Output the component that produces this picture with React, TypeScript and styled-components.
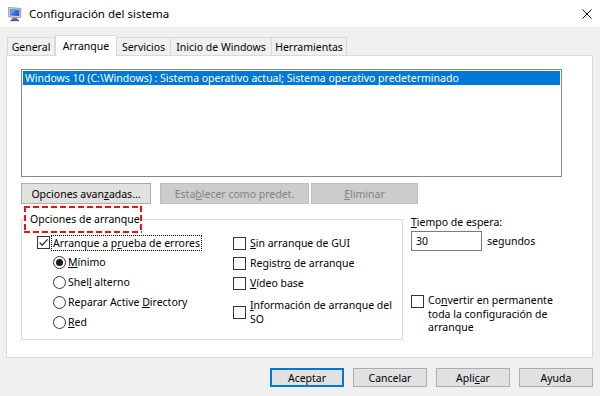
import React from 'react';
import styled, { createGlobalStyle, css } from 'styled-components';

const FONT = `"Noto Sans", "Segoe UI", "DejaVu Sans", sans-serif`;

const Global = createGlobalStyle`
  html, body { margin: 0; padding: 0; }
  body {
    width: 600px; height: 396px; overflow: hidden;
    background: #f0f0f0; font-family: ${FONT}; font-size: 10.5px; color: #000;
  }
  #root { width: 600px; height: 396px; }
`;

const Window = styled.div`
  width: 600px; height: 396px;
  display: flex; flex-direction: column;
  background: #f0f0f0;
`;

const TitleBar = styled.div`
  height: 27px; flex: none;
  background: #fff;
  display: flex; align-items: center;
  padding-left: 7px; padding-right: 8px;
`;

const Title = styled.span`
  margin-left: 6px;
  font-size: 11.5px;
  color: #000;
`;

const CloseGlyph = styled.svg`
  margin-left: auto;
  display: block;
`;

const Body = styled.div`
  flex: 1;
  display: flex; flex-direction: column;
  padding: 8px 7px 0 6px;
`;

const TabStrip = styled.div`
  height: 20px;
  display: flex; align-items: flex-end;
  padding-left: 1px;
  position: relative; z-index: 2;
`;

const Tab = styled.div<{ $w: number; $active?: boolean; $first?: boolean }>`
  box-sizing: border-box;
  width: ${p => p.$w}px;
  height: 18px;
  display: flex; align-items: center; justify-content: center;
  background: #f0f0f0;
  border: 1px solid #d9d9d9; border-bottom: none;
  border-left: ${p => (p.$first ? '1px solid #d9d9d9' : 'none')};
  white-space: nowrap;
  ${p =>
    p.$active &&
    css`
      height: 21px;
      margin-bottom: -1px;
      background: #fff;
      border-left: 1px solid #d9d9d9;
      padding-bottom: 1px;
    `}
`;

const Panel = styled.div`
  box-sizing: border-box;
  width: 587px; height: 303px;
  background: #fff;
  border: 1px solid #d9d9d9;
  padding: 13px 14px 0;
  display: flex; flex-direction: column;
`;

const ListBox = styled.div`
  box-sizing: border-box;
  width: 541px; height: 108px;
  border: 1px solid #828790;
  background: #fff;
  padding: 1px 1px 0;
`;

const ListItem = styled.div<{ $selected?: boolean }>`
  height: 14px; line-height: 14px;
  padding-left: 2px;
  white-space: nowrap;
  background: ${p => (p.$selected ? '#0078d7' : 'transparent')};
  color: ${p => (p.$selected ? '#fff' : '#000')};
`;

const ActionRow = styled.div`
  display: flex;
  margin-top: 6px;
`;

const PushButton = styled.button<{ $w: number; $h?: number; $gap?: number; $default?: boolean }>`
  box-sizing: border-box;
  width: ${p => p.$w}px;
  height: ${p => p.$h ?? 21}px;
  margin: 0 0 0 ${p => p.$gap ?? 0}px;
  padding: 0;
  font-family: ${FONT}; font-size: 10.5px; color: #000;
  background: #e1e1e1;
  border: 1px solid #adadad;
  border-radius: 0;
  display: flex; align-items: center; justify-content: center;
  white-space: nowrap;
  &:disabled {
    background: #cccccc;
    border-color: #bfbfbf;
    color: #838383;
  }
  ${p =>
    p.$default &&
    css`
      border-color: #0078d7;
      box-shadow: inset 0 0 0 1px #0078d7;
    `}
`;

const LowerRow = styled.div`
  display: flex;
  margin-top: 2px;
`;

const GroupBox = styled.fieldset`
  box-sizing: border-box;
  width: 382px; height: 134px;
  margin: 0; min-width: 0;
  padding: 0 0 0 2px;
  border: 1px solid #dcdcdc;
`;

const dash = (dir: string) =>
  `repeating-linear-gradient(${dir}, #ee1111 0 6px, transparent 6px 9px)`;

const Legend = styled.legend`
  padding: 6px 2px 6px 6px;
  line-height: 15px;
  background:
    ${dash('90deg')} top left / 100% 2px no-repeat,
    ${dash('90deg')} bottom left / 100% 2px no-repeat,
    ${dash('180deg')} top left / 2px 100% no-repeat,
    ${dash('180deg')} top right / 2px 100% no-repeat;
`;

const GroupColumns = styled.div`
  display: flex;
`;

const LeftCol = styled.div`
  width: 209px;
  padding-left: 13px;
  box-sizing: border-box;
  display: flex; flex-direction: column;
`;

const RightCol = styled.div`
  display: flex; flex-direction: column;
`;

const OptionRow = styled.div<{ $h?: number; $indent?: number; $top?: number }>`
  display: flex; align-items: center;
  height: ${p => (p.$h ? `${p.$h}px` : 'auto')};
  padding-left: ${p => p.$indent ?? 0}px;
  margin-top: ${p => p.$top ?? 0}px;
  white-space: nowrap;
`;

const Box = styled.span`
  box-sizing: border-box;
  flex: none;
  width: 13px; height: 13px;
  border: 1px solid #333;
  background: #fff;
  display: flex; align-items: center; justify-content: center;
`;

const Circle = styled.span<{ $on?: boolean }>`
  box-sizing: border-box;
  flex: none;
  width: 13px; height: 13px;
  border: 1px solid #333;
  border-radius: 50%;
  background: #fff;
  display: flex; align-items: center; justify-content: center;
  &::after {
    content: '';
    display: ${p => (p.$on ? 'block' : 'none')};
    width: 7px; height: 7px; border-radius: 50%;
    background: #1a1a1a;
  }
`;

const Label = styled.span<{ $gap?: number; $focus?: boolean }>`
  margin-left: ${p => p.$gap ?? 4}px;
  ${p =>
    p.$focus &&
    css`
      outline: 1px dotted #000;
      outline-offset: 0;
      padding: 0 1px;
      margin-left: 2px;
    `}
`;

const MultiLabel = styled.span`
  margin-left: 4px;
  display: flex; flex-direction: column;
  white-space: nowrap;
`;

const Line = styled.span`
  display: block;
  height: 13.5px;
  line-height: 13.5px;
`;

const Mn = styled.u`
  text-decoration: underline;
  text-decoration-thickness: 1px;
  text-underline-offset: 1px;
`;

const SideColumn = styled.div`
  margin-left: 8px;
  display: flex; flex-direction: column;
`;

const FieldLabel = styled.div`
  margin-top: 9px;
  line-height: 14px;
`;

const InputRow = styled.div`
  margin-top: 2px;
  display: flex; align-items: center;
`;

const TextBox = styled.div`
  box-sizing: border-box;
  width: 71px; height: 20px;
  border: 1px solid #7a7a7a;
  background: #fff;
  padding-left: 4px;
  display: flex; align-items: center;
`;

const Units = styled.span`
  margin-left: 5px;
`;

const ConvertRow = styled.div`
  margin-top: 43px;
  display: flex; align-items: flex-start;
  & > ${Box} { margin-top: 1px; }
`;

const DialogBar = styled.div`
  display: flex; justify-content: flex-end;
  margin-top: 10px;
  gap: 9px;
`;

const CheckMark = () => (
  <svg width="11" height="11" viewBox="0 0 11 11">
    <path d="M1.6 5.6 L4.2 8.2 L9.6 2.4" fill="none" stroke="#1a1a1a" strokeWidth="1.2" />
  </svg>
);

const Check: React.FC<{ on?: boolean }> = ({ on }) => <Box>{on && <CheckMark />}</Box>;

const AppIcon = () => (
  <svg width="16" height="16" viewBox="0 0 16 16">
    <defs>
      <linearGradient id="scr" x1="0" y1="0" x2="1" y2="1">
        <stop offset="0" stopColor="#5a8ef0" />
        <stop offset="1" stopColor="#1c4fc4" />
      </linearGradient>
    </defs>
    <path d="M1.5 1.5 L14 2.5 L13.5 11.5 L1.8 11 Z" fill="#d8dde6" stroke="#7c8696" strokeWidth="0.8" />
    <path d="M3 3 L12.6 3.8 L12.2 10 L3.2 9.6 Z" fill="url(#scr)" />
    <path d="M4 4 L8 4.3 L4.5 8.5 Z" fill="#ffffff" opacity="0.25" />
    <path d="M5.5 11.8 L10 12 L11 14.2 L4.5 14 Z" fill="#6b7280" />
    <rect x="3.5" y="13.8" width="8.5" height="1.4" fill="#4b5563" />
  </svg>
);

const tabs = [
  { t: 'General', w: 48 },
  { t: 'Arranque', w: 62, active: true },
  { t: 'Servicios', w: 54 },
  { t: 'Inicio de Windows', w: 101 },
  { t: 'Herramientas', w: 75 },
];

export default function App() {
  return (
    <>
      <Global />
      <Window>
        <TitleBar>
          <AppIcon />
          <Title>Configuración del sistema</Title>
          <CloseGlyph width="10" height="10" viewBox="0 0 10 10">
            <path d="M0.5 0.5 L9.5 9.5 M9.5 0.5 L0.5 9.5" stroke="#111" strokeWidth="1" fill="none" />
          </CloseGlyph>
        </TitleBar>
        <Body>
          <TabStrip>
            {tabs.map((tb, i) => (
              <Tab key={tb.t} $w={tb.w} $active={tb.active} $first={i === 0}>
                {tb.t}
              </Tab>
            ))}
          </TabStrip>
          <Panel>
            <ListBox>
              <ListItem $selected>
                Windows 10 (C:\Windows) : Sistema operativo actual; Sistema operativo predeterminado
              </ListItem>
            </ListBox>
            <ActionRow>
              <PushButton $w={130}>
                Opciones avan<Mn>z</Mn>adas...
              </PushButton>
              <PushButton $w={149} $gap={9} disabled>
                Esta<Mn>b</Mn>lecer como predet.
              </PushButton>
              <PushButton $w={107} $gap={2} disabled>
                <Mn>E</Mn>liminar
              </PushButton>
            </ActionRow>
            <LowerRow>
              <GroupBox>
                <Legend>Opciones de arranque</Legend>
                <GroupColumns>
                  <LeftCol>
                    <OptionRow $h={19}>
                      <Check on />
                      <Label $focus>
                        Arranque a p<Mn>r</Mn>ueba de errores
                      </Label>
                    </OptionRow>
                    <OptionRow $h={20} $indent={16}>
                      <Circle $on />
                      <Label $gap={2}>
                        <Mn>M</Mn>ínimo
                      </Label>
                    </OptionRow>
                    <OptionRow $h={20} $indent={16}>
                      <Circle />
                      <Label $gap={2}>
                        Shel<Mn>l</Mn> alterno
                      </Label>
                    </OptionRow>
                    <OptionRow $h={20} $indent={16}>
                      <Circle />
                      <Label $gap={2}>
                        Reparar Active <Mn>D</Mn>irectory
                      </Label>
                    </OptionRow>
                    <OptionRow $h={20} $indent={16}>
                      <Circle />
                      <Label $gap={2}>
                        <Mn>R</Mn>ed
                      </Label>
                    </OptionRow>
                  </LeftCol>
                  <RightCol>
                    <OptionRow $h={20}>
                      <Check />
                      <Label>
                        <Mn>S</Mn>in arranque de GUI
                      </Label>
                    </OptionRow>
                    <OptionRow $h={20}>
                      <Check />
                      <Label>
                        Registr<Mn>o</Mn> de arranque
                      </Label>
                    </OptionRow>
                    <OptionRow $h={20}>
                      <Check />
                      <Label>
                        <Mn>V</Mn>ídeo base
                      </Label>
                    </OptionRow>
                    <OptionRow $top={6}>
                      <Check />
                      <MultiLabel>
                        <Line>
                          <Mn>I</Mn>nformación de arranque del
                        </Line>
                        <Line>SO</Line>
                      </MultiLabel>
                    </OptionRow>
                  </RightCol>
                </GroupColumns>
              </GroupBox>
              <SideColumn>
                <FieldLabel>
                  <Mn>T</Mn>iempo de espera:
                </FieldLabel>
                <InputRow>
                  <TextBox>30</TextBox>
                  <Units>segundos</Units>
                </InputRow>
                <ConvertRow>
                  <Check />
                  <MultiLabel>
                    <Line>
                      Co<Mn>n</Mn>vertir en permanente
                    </Line>
                    <Line>toda la configuración de</Line>
                    <Line>arranque</Line>
                  </MultiLabel>
                </ConvertRow>
              </SideColumn>
            </LowerRow>
          </Panel>
          <DialogBar>
            <PushButton $w={74} $h={19} $default>
              Aceptar
            </PushButton>
            <PushButton $w={74} $h={19}>
              Cancelar
            </PushButton>
            <PushButton $w={74} $h={19}>
              Apli<Mn>c</Mn>ar
            </PushButton>
            <PushButton $w={74} $h={19}>
              Ayuda
            </PushButton>
          </DialogBar>
        </Body>
      </Window>
    </>
  );
}
